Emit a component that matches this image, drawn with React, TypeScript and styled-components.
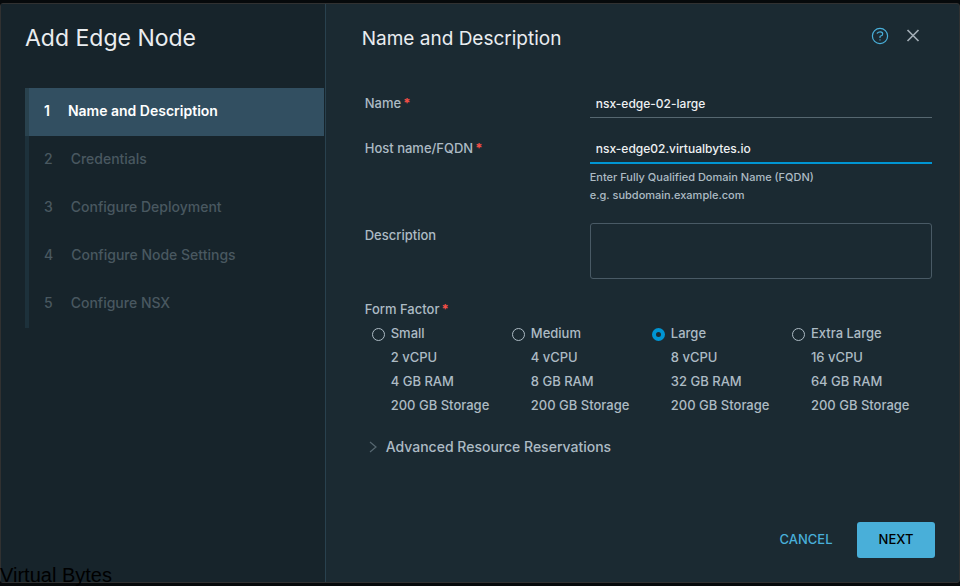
import React, { useState } from "react";
import styled, { createGlobalStyle } from "styled-components";

const GlobalStyle = createGlobalStyle`
  *, *::before, *::after { box-sizing: border-box; }
  body {
    margin: 0;
    background: #06090b;
    color: #adbbc4;
    font-family: Inter, "Liberation Sans", sans-serif;
    font-size: 13px;
    font-weight: 500;
    line-height: 24px;
  }
  button, input, textarea { font: inherit; color: inherit; }
`;

const Page = styled.div`
  display: flex;
  min-height: 100vh;
  padding: 3px 0;
`;

const Dialog = styled.div`
  flex: 1;
  display: grid;
  grid-template-columns: calc(34% - 1px) 1fr;
  border: 1px solid #313131;
  border-radius: 3px;
  background: #1b2a32;
`;

const Sidebar = styled.aside`
  padding: 20px 1px 24px 24px;
  border-right: 1px solid #29414e;
  background: #17242b;
`;

const DialogTitle = styled.h1`
  margin: 0 0 36px;
  font-size: 23px;
  font-weight: 400;
  line-height: 28px;
  color: #eaedf0;
`;

const Steps = styled.ol`
  margin: 0;
  padding: 0;
  list-style: none;
`;

const StepItem = styled.li<{ $active: boolean }>`
  border-left: 4px solid ${(p) => (p.$active ? "#29424e" : "#1d313b")};
`;

const StepButton = styled.button<{ $active: boolean }>`
  display: flex;
  align-items: center;
  gap: 18px;
  width: 100%;
  height: 48px;
  padding: 0 15px 2px;
  border: 0;
  background: ${(p) => (p.$active ? "#324f61" : "transparent")};
  color: ${(p) => (p.$active ? "#ffffff" : "#495860")};
  font-size: 14px;
  font-weight: ${(p) => (p.$active ? 600 : 500)};
  text-align: left;
`;

const Content = styled.main`
  display: flex;
  flex-direction: column;
  min-width: 0;
  padding: 21px 24px 24px 36px;
`;

const Header = styled.header`
  display: flex;
  align-items: flex-start;
  gap: 16px;
  padding-right: 14px;
`;

const StepTitle = styled.h2`
  flex: 1;
  margin: 0;
  font-size: 19px;
  font-weight: 400;
  line-height: 28px;
  color: #eaedf0;
`;

const IconButton = styled.button`
  display: flex;
  align-items: center;
  height: 22px;
  padding: 0;
  border: 0;
  background: none;
`;

const Form = styled.form`
  flex: 1;
  display: flex;
  flex-direction: column;
  padding: 38px 3px 0;
`;

const Field = styled.div`
  display: grid;
  grid-template-columns: 225px 1fr;
  margin-bottom: 18px;
`;

const Label = styled.label`
  line-height: 24px;
`;

const RequiredMark = styled.span`
  margin-left: 2px;
  color: #f54f47;
  font-weight: 700;
`;

const TextInput = styled.input`
  display: block;
  width: 100%;
  height: 27px;
  padding: 0 6px 1px;
  border: 0;
  border-bottom: 1px solid #566770;
  border-radius: 0;
  outline: 0;
  background: none;
  color: #eef1f3;
  font-size: 12px;
  &[aria-describedby] {
    height: 28px;
    border-bottom: 2px solid #0095d3;
  }
`;

const Help = styled.p`
  margin: 4px 0 1px;
  font-size: 11px;
  line-height: 18px;
`;

const TextArea = styled.textarea`
  display: block;
  width: 100%;
  height: 56px;
  padding: 6px;
  border: 1px solid #495a65;
  border-radius: 3px;
  background: none;
  resize: none;
`;

const FormFactors = styled.fieldset`
  display: grid;
  grid-template-columns: repeat(4, 1fr);
  margin: 0;
  padding: 0 0 0 7px;
  border: 0;
`;

const Legend = styled.legend`
  margin-left: -7px;
  padding: 0;
`;

const Option = styled.label`
  display: grid;
  grid-template-columns: 13px 1fr;
  column-gap: 6px;
  white-space: nowrap;
`;

const Radio = styled.input`
  appearance: none;
  width: 13px;
  height: 13px;
  margin: 7px 0 0;
  border: 1px solid #adbbc4;
  border-radius: 50%;
  &:checked { border: 4px solid #0095d3; }
`;

const Specs = styled.span`
  display: flex;
  flex-direction: column;
`;

const Disclosure = styled.button`
  display: flex;
  align-items: center;
  align-self: flex-start;
  gap: 9px;
  margin-top: 18px;
  padding: 0 0 0 4px;
  border: 0;
  background: none;
  font-size: 14px;
`;

const Footer = styled.footer`
  display: flex;
  justify-content: flex-end;
  gap: 12px;
`;

const ActionButton = styled.button<{ $primary?: boolean }>`
  min-width: 78px;
  height: 36px;
  padding: 0 12px 2px;
  border: 0;
  border-radius: 3px;
  background: ${(p) => (p.$primary ? "#49afd9" : "transparent")};
  color: ${(p) => (p.$primary ? "#000000" : "#49afd9")};
`;

const Watermark = styled.div`
  position: absolute;
  bottom: 0;
  left: 0;
  font: 20px/22px "Liberation Sans", Arial, sans-serif;
  color: #000000;
`;

const steps = ["Name and Description", "Credentials", "Configure Deployment", "Configure Node Settings", "Configure NSX"];

const sizes = [
  { name: "Small", specs: ["2 vCPU", "4 GB RAM", "200 GB Storage"] },
  { name: "Medium", specs: ["4 vCPU", "8 GB RAM", "200 GB Storage"] },
  { name: "Large", specs: ["8 vCPU", "32 GB RAM", "200 GB Storage"] },
  { name: "Extra Large", specs: ["16 vCPU", "64 GB RAM", "200 GB Storage"] },
];

const HelpIcon = () => (
  <svg width="18" height="18" viewBox="0 0 18 18" fill="none" stroke="#49afd9" strokeWidth="1.2" strokeLinecap="round">
    <circle cx="9" cy="9" r="7.6" />
    <path d="M6.3 6.2C7.2 5 8.3 4.7 9.4 4.8c1.4.1 2.3 1 2.3 2.1 0 1.3-1.1 1.8-2.1 2.1-.5.2-.6.4-.6.8v.7M9 12.8v.2" />
  </svg>
);

const CloseIcon = () => (
  <svg width="16" height="16" viewBox="0 0 16 16" fill="none" stroke="#a2adb5" strokeWidth="1.7">
    <path d="M2.5 2l11 11M13.5 2l-11 11" />
  </svg>
);

const ChevronIcon = () => (
  <svg width="8" height="12" viewBox="0 0 8 12" fill="none" stroke="#566770" strokeWidth="1.2">
    <path d="M1 1l6 5-6 5" />
  </svg>
);

export default function App() {
  const [name, setName] = useState("nsx-edge-02-large");
  const [host, setHost] = useState("nsx-edge02.virtualbytes.io");
  const [size, setSize] = useState("Large");

  return (
    <>
      <GlobalStyle />
      <Page>
        <Dialog role="dialog" aria-labelledby="dialog-title">
          <Sidebar>
            <DialogTitle id="dialog-title">Add Edge Node</DialogTitle>
            <Steps>
              {steps.map((step, i) => (
                <StepItem key={step} $active={i === 0}>
                  <StepButton type="button" $active={i === 0} disabled={i !== 0}>
                    <span>{i + 1}</span>
                    <span>{step}</span>
                  </StepButton>
                </StepItem>
              ))}
            </Steps>
          </Sidebar>
          <Content>
            <Header>
              <StepTitle>Name and Description</StepTitle>
              <IconButton type="button" aria-label="Help"><HelpIcon /></IconButton>
              <IconButton type="button" aria-label="Close"><CloseIcon /></IconButton>
            </Header>
            <Form>
              <Field>
                <Label htmlFor="name">Name<RequiredMark>*</RequiredMark></Label>
                <TextInput id="name" value={name} onChange={(e) => setName(e.target.value)} />
              </Field>
              <Field>
                <Label htmlFor="host">Host name/FQDN<RequiredMark>*</RequiredMark></Label>
                <div>
                  <TextInput id="host" aria-describedby="host-help" value={host} onChange={(e) => setHost(e.target.value)} />
                  <Help id="host-help">Enter Fully Qualified Domain Name (FQDN)<br />e.g. subdomain.example.com</Help>
                </div>
              </Field>
              <Field>
                <Label htmlFor="description">Description</Label>
                <TextArea id="description" />
              </Field>
              <FormFactors>
                <Legend>Form Factor<RequiredMark>*</RequiredMark></Legend>
                {sizes.map((s) => (
                  <Option key={s.name}>
                    <Radio type="radio" name="size" checked={size === s.name} onChange={() => setSize(s.name)} />
                    <Specs>
                      <span>{s.name}</span>
                      {s.specs.map((spec) => <span key={spec}>{spec}</span>)}
                    </Specs>
                  </Option>
                ))}
              </FormFactors>
              <Disclosure type="button" aria-expanded={false}>
                <ChevronIcon />
                Advanced Resource Reservations
              </Disclosure>
            </Form>
            <Footer>
              <ActionButton type="button">CANCEL</ActionButton>
              <ActionButton type="button" $primary>NEXT</ActionButton>
            </Footer>
          </Content>
        </Dialog>
      </Page>
      <Watermark>Virtual Bytes</Watermark>
    </>
  );
}
